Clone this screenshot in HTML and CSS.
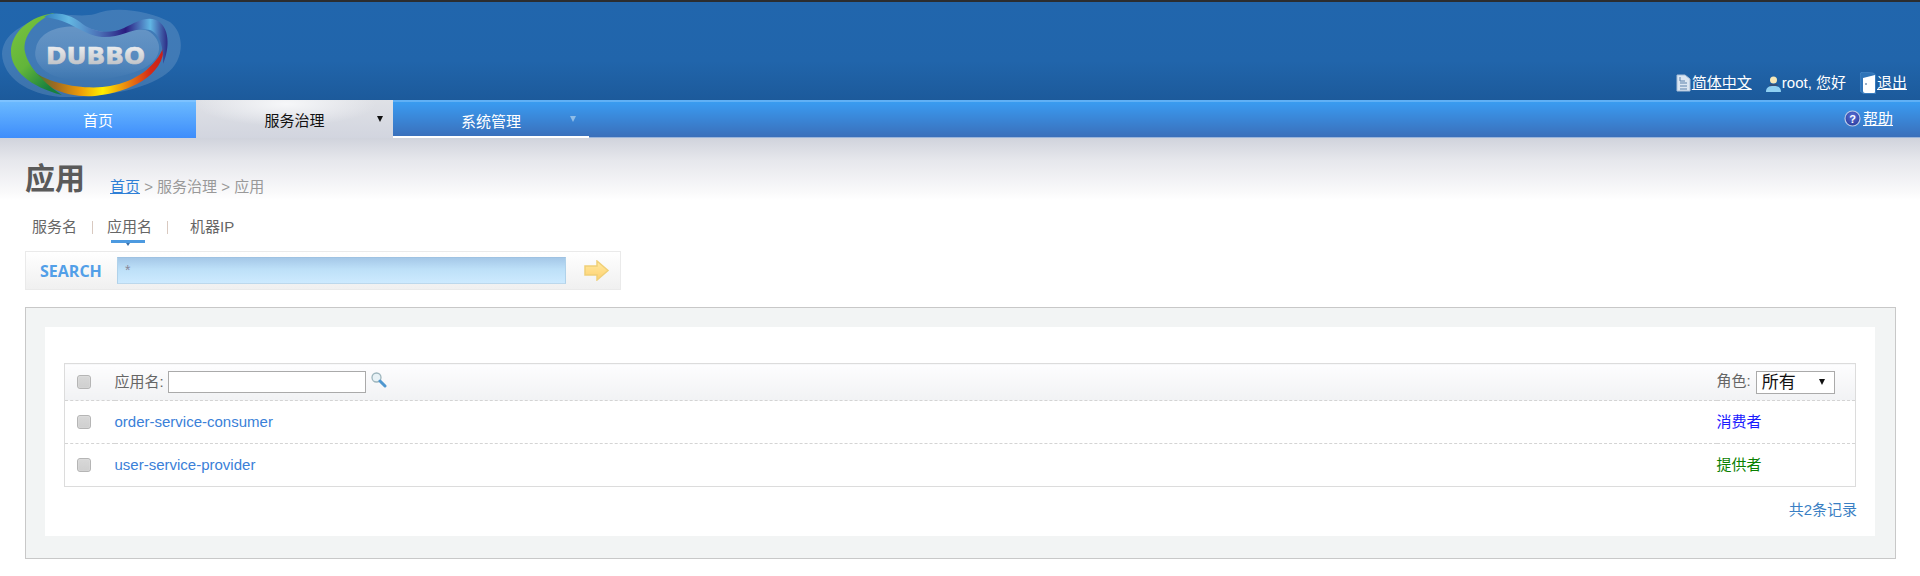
FILE: index.html
```html
<!DOCTYPE html>
<html lang="zh">
<head>
<meta charset="utf-8">
<title>Dubbo</title>
<link rel="stylesheet" href="styles.css">
</head>
<body>
<header class="top">
  <svg class="logo" width="184" height="98" viewBox="0 0 184 98">
    <defs>
      <linearGradient id="gGreen" x1="0" y1="0" x2="0.6" y2="1"><stop offset="0" stop-color="#7cc53e"/><stop offset="0.6" stop-color="#62b53a"/><stop offset="1" stop-color="#17803f"/></linearGradient>
      <linearGradient id="gBottom" x1="0" y1="0" x2="1" y2="0"><stop offset="0" stop-color="#1f7f3c"/><stop offset="0.2" stop-color="#a06a20"/><stop offset="0.38" stop-color="#eb9a08"/><stop offset="0.55" stop-color="#fff000"/><stop offset="0.72" stop-color="#ea8a10"/><stop offset="0.9" stop-color="#d42a16"/><stop offset="1" stop-color="#c8201a"/></linearGradient>
      <linearGradient id="gTop" x1="0" y1="0" x2="1" y2="0"><stop offset="0" stop-color="#2f7fc0"/><stop offset="0.2" stop-color="#63b7e2"/><stop offset="0.45" stop-color="#4a6fb6"/><stop offset="0.66" stop-color="#2a1c80"/><stop offset="0.86" stop-color="#61b6e4"/><stop offset="1" stop-color="#2c2a84"/></linearGradient>
      <linearGradient id="gText" x1="0" y1="0" x2="0" y2="1"><stop offset="0" stop-color="#f6f7f8"/><stop offset="1" stop-color="#b4b7bc"/></linearGradient>
      <linearGradient id="gInner" x1="0" y1="0" x2="0" y2="1"><stop offset="0" stop-color="#fff" stop-opacity="0.2"/><stop offset="0.6" stop-color="#fff" stop-opacity="0.12"/><stop offset="1" stop-color="#fff" stop-opacity="0"/></linearGradient>
    </defs>
    <path class="logo-halo" d="M2 52C3 36 14 28 30 20C55 6 75 17 95 12C115 3 150 9 170 20C186 32 184 60 166 72C145 88 100 96 60 95C28 92 3 76 2 52Z"/>
    <path d="M36 46C40 26 70 20 95 28C120 36 138 22 150 30C166 42 160 60 140 68C110 80 70 82 50 72C38 65 33 56 36 46Z" fill="url(#gInner)"/>
    <path d="M28 65C48 84 90 88 110 84C135 80 156 65 164 44C164 74 130 90 95 94C65 96 40 84 28 65Z" fill="url(#gBottom)"/>
    <path d="M55 11C30 14 11 30 11 50C11 68 30 85 62 93C45 82 28 65 25 50C22 35 35 18 55 11Z" fill="url(#gGreen)"/>
    <path d="M44 15C52 9 68 11 80 20C92 30 108 33 124 26C136 20 146 14 156 18C170 24 170 46 163 62C164 46 160 32 150 28C134 24 122 36 102 35C82 33 72 18 44 15Z" fill="url(#gTop)"/>
    <text class="logo-text" x="46" y="62" fill="url(#gText)" stroke="url(#gText)" textLength="99" lengthAdjust="spacingAndGlyphs">DUBBO</text>
  </svg>
  <div class="user-links">
    <span class="user-item">
      <svg class="ico" width="15" height="18" viewBox="0 0 15 18"><path d="M1 1H9L14 5V17H1Z" fill="#dbe6f2" stroke="#a9bfd8"/><path d="M4 9H11M4 12H11M4 15H11M4 3V7H9" fill="none" stroke="#5d82ac"/></svg><a href="#">简体中文</a>
    </span>
    <span class="user-item">
      <svg class="ico" width="15" height="17" viewBox="0 0 15 17"><circle cx="7.500" cy="5" r="3.500" fill="#f6e8b8"/><path d="M4 9H11L12 11H3Z" fill="#33507a"/><path d="M0 17C0 12 3 11 7.500 11S15 12 15 17Z" fill="#8fd0f2"/></svg><span>root, 您好</span>
    </span>
    <span class="user-item">
      <svg class="ico" width="16" height="22" viewBox="0 0 16 22"><path d="M0 3Q0 0 3 0L13 1Q16 2 16 5V20Q16 22 14 22H4L0 19Z" fill="#2f74b8" stroke="#5a97d0" stroke-width=".5"/><path d="M3 6L15 3V20Q15 21 14 21H5Q3 21 3 19Z" fill="#fff"/><circle cx="6" cy="12" r="1" fill="#7a97b8"/></svg><a href="#">退出</a>
    </span>
  </div>
</header>
<nav class="menu">
  <a class="menu-item menu-home" href="#">首页</a>
  <a class="menu-item menu-active" href="#">服务治理<i class="caret caret-dark"></i></a>
  <a class="menu-item menu-normal" href="#">系统管理<i class="caret caret-light"></i></a>
  <div class="menu-help">
    <svg width="17" height="17" viewBox="0 0 17 17"><defs><radialGradient id="gHelp" cx="0.5" cy="0.35" r="0.7"><stop offset="0" stop-color="#5a72d8"/><stop offset="1" stop-color="#26389a"/></radialGradient></defs><circle cx="8.500" cy="8.500" r="7.500" fill="url(#gHelp)" stroke="#b8c8e6" stroke-width="1.200"/><text class="help-mark" x="8.500" y="12.500">?</text></svg>
    <a href="#">帮助</a>
  </div>
</nav>
<main class="content">
  <div class="title-row">
    <h1>应用</h1>
    <div class="crumbs"><a href="#">首页</a> &gt; 服务治理 &gt; 应用</div>
  </div>
  <ul class="tabs">
    <li class="tab-first">服务名</li>
    <li class="tab-sep"></li>
    <li class="tab-on">应用名</li>
    <li class="tab-sep"></li>
    <li class="tab-last">机器IP</li>
  </ul>
  <div class="search">
    <span class="search-label">SEARCH</span>
    <div class="search-input">*</div>
    <svg class="search-go" width="26" height="21" viewBox="0 0 26 21"><defs><linearGradient id="gArrow" x1="0" y1="0" x2="0" y2="1"><stop offset="0" stop-color="#ffeaa0"/><stop offset="1" stop-color="#ffd070"/></linearGradient></defs><path d="M1 6H13V1L24 10.500L13 20V15H1Z" fill="url(#gArrow)" stroke="#f0d078" stroke-width="1.500"/></svg>
  </div>
  <section class="panel">
    <div class="panel-inner">
      <table class="list">
        <tr class="list-head">
          <td class="cell-check"><span class="check"></span></td>
          <td class="cell-name">
            <div class="filter">应用名:<span class="filter-input"></span>
              <svg width="17" height="17" viewBox="0 0 17 17"><circle cx="6.500" cy="6.500" r="4.500" fill="#e8f2f6" stroke="#9db5bd" stroke-width="1.300"/><path d="M10 10L15 15" stroke="#4f97cf" stroke-width="3" stroke-linecap="round"/></svg>
            </div>
          </td>
          <td class="cell-role">角色:<span class="select">所有<i class="caret caret-dark"></i></span></td>
        </tr>
        <tr>
          <td class="cell-check"><span class="check"></span></td>
          <td class="cell-name"><a href="#">order-service-consumer</a></td>
          <td class="cell-role role-consumer">消费者</td>
        </tr>
        <tr>
          <td class="cell-check"><span class="check"></span></td>
          <td class="cell-name"><a href="#">user-service-provider</a></td>
          <td class="cell-role role-provider">提供者</td>
        </tr>
      </table>
      <div class="pager">共2条记录</div>
    </div>
  </section>
</main>
</body>
</html>
```
FILE: styles.css
```css
* { box-sizing: border-box; }
html, body { margin: 0; height: 100%; }
body {
  background: #fff;
  color: #666;
  font: 15px/1.2 "Liberation Sans", "Noto Sans CJK SC", sans-serif;
  overflow: hidden;
}
a { color: inherit; }

.top {
  height: 100px;
  border-top: 2px solid #2b2d30;
  background: linear-gradient(#2166ad 0, #2165ab 60%, #1c5a9b 100%);
  display: flex;
  justify-content: space-between;
  align-items: flex-end;
  color: #fff;
  padding-right: 13px;
}
.logo { display: block; align-self: flex-start; }
.logo-halo { fill: #fff; opacity: .14; }
.logo-text { font: bold 23.500px "DejaVu Sans", sans-serif; stroke-width: .6px; }
.user-links { display: flex; gap: 14px; padding-bottom: 6px; }
.user-item { display: flex; align-items: center; gap: 1px; height: 22px; }
.ico { display: block; }

.menu {
  height: 38px;
  display: flex;
  background: linear-gradient(#399cf0 0, #3a97ec 10%, #3a6fba 100%);
  border-top: 2px solid #60b0f5;
  border-bottom: 1px solid #9ab4da;
  color: #fff;
}
.menu-item {
  position: relative;
  width: 196px;
  display: flex;
  align-items: center;
  justify-content: center;
  text-decoration: none;
}
.menu-home {
  margin: -2px 0 -1px;
  border-top: 2px solid #7dc2ff;
  background: linear-gradient(#6ab9ff, #3e8dfb);
  color: #fff;
  padding-top: 1px;
}
.menu-active {
  width: 197px;
  margin: -2px 0 -1px;
  background:
    radial-gradient(ellipse 90px 22px at 90px 4px, #f6f7f9, rgba(246, 247, 249, 0) 100%),
    linear-gradient(#dfe1e6, #d2d5df);
  color: #111;
  padding-top: 4px;
}
.menu-normal {
  border-bottom: 2px solid #fff;
  margin-bottom: -1px;
  padding-top: 5px;
}
.caret {
  position: absolute;
  width: 0;
  height: 0;
  border-style: solid;
  border-width: 6px 3.500px 0;
  border-color: transparent;
}
.menu-active .caret { right: 10.500px; top: 16px; }
.menu-normal .caret { right: 13px; top: 14px; }
.caret-dark { border-top-color: #111; }
.caret-light { border-top-color: #8fbde8; }
.menu-help {
  margin-left: auto;
  display: flex;
  align-items: center;
  gap: 2px;
  padding: 0 27px 2px 0;
}
.help-mark { font: bold 11px "Liberation Sans", sans-serif; fill: #fff; text-anchor: middle; }

.content {
  padding: 23px 24px 0 25px;
  background: linear-gradient(#d0d3dc 0, #e6e7ec 22px, #fafafb 55px, #fff 62px) no-repeat;
  height: 438px;
}
.title-row { display: flex; align-items: flex-end; height: 36px; }
h1 {
  margin: 0;
  font-size: 30px;
  line-height: 36px;
  font-weight: bold;
  color: #5a5a5a;
}
.crumbs { margin-left: 25px; padding-bottom: 1px; color: #999; }
.crumbs a { color: #2f7fd6; }

.tabs {
  list-style: none;
  margin: 20px 0 0;
  padding: 0 0 0 7px;
  display: flex;
  align-items: center;
  height: 20px;
}
.tab-sep { width: 1px; height: 13px; background: #d9c9c0; margin: 0 14.500px; }
.tab-on { position: relative; }
.tab-on::after {
  content: "";
  position: absolute;
  left: 4px;
  width: 34px;
  bottom: -7px;
  height: 3px;
  background: #4d9ae0;
}
.tab-on::before {
  content: "";
  position: absolute;
  left: 19px;
  bottom: -10px;
  border-style: solid;
  border-width: 3px 2.500px 0;
  border-color: #3a6fa8 transparent transparent;
}
.tab-last { margin-left: 8px; }

.search {
  margin-top: 14px;
  width: 596px;
  height: 39px;
  display: flex;
  align-items: center;
  border: 1px solid #eaeaea;
  background: linear-gradient(#fff, #f0f0f0);
}
.search-label {
  width: 91px;
  padding-left: 14px;
  color: #529fe8;
  font: bold 16px "Open Sans", "Liberation Sans", sans-serif;
}
.search-input {
  width: 449px;
  height: 27px;
  padding: 2px 0 0 7px;
  color: #889;
  font-size: 14px;
  line-height: 20px;
  background: linear-gradient(#a5c8e8, #bde0f8 45%, #cdeaff);
  border: 1px solid #b0d2ea;
  border-top-color: #9fc2e2;
  border-bottom-color: #bcd8ec;
}
.search-go { margin-left: 18px; }

.panel {
  margin-top: 17px;
  height: 252px;
  border: 1px solid #c8c8c8;
  background: #f2f4f4;
  padding: 19px 20px 22px 19px;
}
.panel-inner {
  height: 100%;
  background: #fff;
  padding: 36px 19px 0;
}
.list {
  width: 100%;
  border-collapse: collapse;
  border: 1px solid #dcdcdc;
}
.list td { height: 43px; padding: 0; border-bottom: 1px dashed #d4d4d4; }
.list tr:last-child td { border-bottom: 0; }
.list-head td {
  height: 37px;
  background: linear-gradient(#fdfdfe, #f1f2f4);
}
.cell-check { width: 50px; padding-left: 12px !important; }
.cell-name { color: #3a80d8; }
.cell-name a { text-decoration: none; }
.cell-role { width: 139px; }
.list-head .cell-name { color: #666; }
.check {
  display: block;
  width: 14px;
  height: 14px;
  border: 1px solid #b5b5b5;
  border-radius: 3px;
  background: linear-gradient(#d8d8d8, #cfcfcf);
  box-shadow: inset 0 0 1px #fff;
}
.filter { display: flex; align-items: center; gap: 4px; }
.filter-input {
  width: 198px;
  height: 22px;
  border: 1px solid #aaa;
  background: #fff;
}
.filter svg { margin-top: -6px; }
.select {
  position: relative;
  display: inline-block;
  width: 79px;
  height: 23px;
  margin-left: 5px;
  padding-left: 5px;
  border: 1px solid #aaa;
  background: #fff;
  color: #111;
  font-size: 17px;
  line-height: 22px;
  vertical-align: middle;
}
.select .caret { right: 8.500px; top: 7px; }
.role-consumer { color: #1a1aff; }
.role-provider { color: #0a8000; }
.pager { margin-top: 14px; text-align: right; color: #3a7fc4; margin-right: -1px; }
```
